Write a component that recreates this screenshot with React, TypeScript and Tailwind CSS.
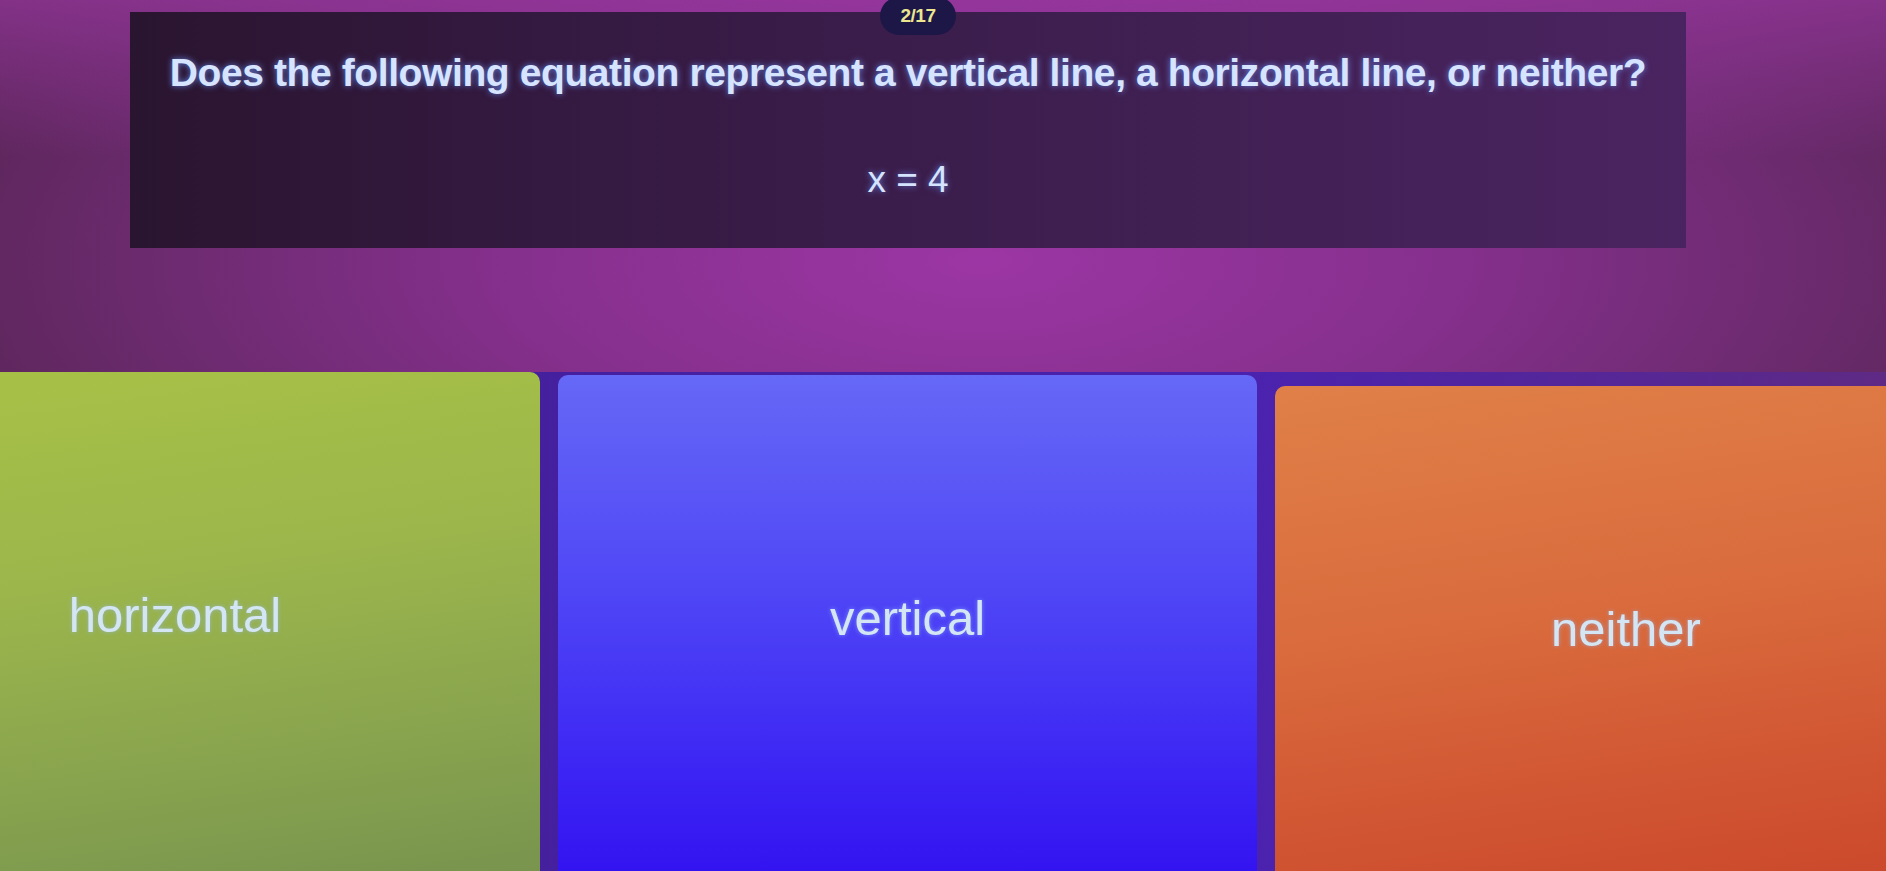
import React from 'react';

const font = { fontFamily: '"Liberation Sans", Arial, sans-serif' };

const answers = [
  {
    label: 'horizontal',
    box: 'w-[730px] -ml-[190px] mt-0 bg-[linear-gradient(172deg,#a8c246_0%,#9cb64c_40%,#86a24e_75%,#76924e_100%)]',
  },
  {
    label: 'vertical',
    box: 'w-[699px] mt-[3px] bg-[linear-gradient(180deg,#6668f6_0%,#5048f6_40%,#3d26f4_75%,#3110f0_100%)]',
  },
  {
    label: 'neither',
    box: 'w-[702px] mt-[14px] bg-[linear-gradient(172deg,#e08048_0%,#d96a3c_45%,#d05432_75%,#c9452a_100%)]',
  },
];

export default function App() {
  return (
    <div
      style={font}
      className="relative w-[1886px] h-[871px] overflow-hidden bg-[linear-gradient(180deg,rgba(170,60,180,0.55)_0%,rgba(170,60,180,0)_18%),radial-gradient(ellipse_70%_60%_at_52%_30%,#9c36a4_0%,#86308e_35%,#6a2a6c_65%,#4a2244_100%)]"
    >
      {/* question panel */}
      <div className="ml-[130px] mt-[12px] w-[1556px] h-[236px] pt-[39px] flex flex-col items-center bg-[linear-gradient(90deg,#2a1530_0%,#351a42_30%,#3e1f50_60%,#4a2460_100%)]">
        <p className="text-[39px] leading-[44px] font-bold tracking-[-0.4px] text-[#d6e4ff] [text-shadow:0_0_6px_rgba(110,150,255,0.8)]">
          Does the following equation represent a vertical line, a horizontal line, or neither?
        </p>
        <p className="mt-[63px] text-[37px] leading-[44px] text-[#d6e4ff] [text-shadow:0_0_6px_rgba(110,150,255,0.8)]">
          x = 4
        </p>
      </div>

      {/* question counter */}
      <div className="absolute left-[880px] top-[-3px] w-[76px] h-[38px] rounded-full bg-[#1d1747] flex items-center justify-center">
        <span className="text-[19px] font-bold text-[#ece690] tracking-[-0.5px]">2/17</span>
      </div>

      {/* answers */}
      <div className="mt-[124px] h-[510px] flex items-start gap-[18px] bg-[linear-gradient(90deg,#5a2a6a_0%,#4420a0_30%,#4a22b0_65%,#5e2a84_100%)]">
        {answers.map((a) => (
          <div
            key={a.label}
            className={`${a.box} shrink-0 h-[520px] rounded-[10px] pt-[215px] text-center`}
          >
            <span className="text-[49px] leading-[56px] text-[#d4e6f4] [text-shadow:0_0_4px_rgba(150,190,255,0.6)]">
              {a.label}
            </span>
          </div>
        ))}
      </div>
    </div>
  );
}
